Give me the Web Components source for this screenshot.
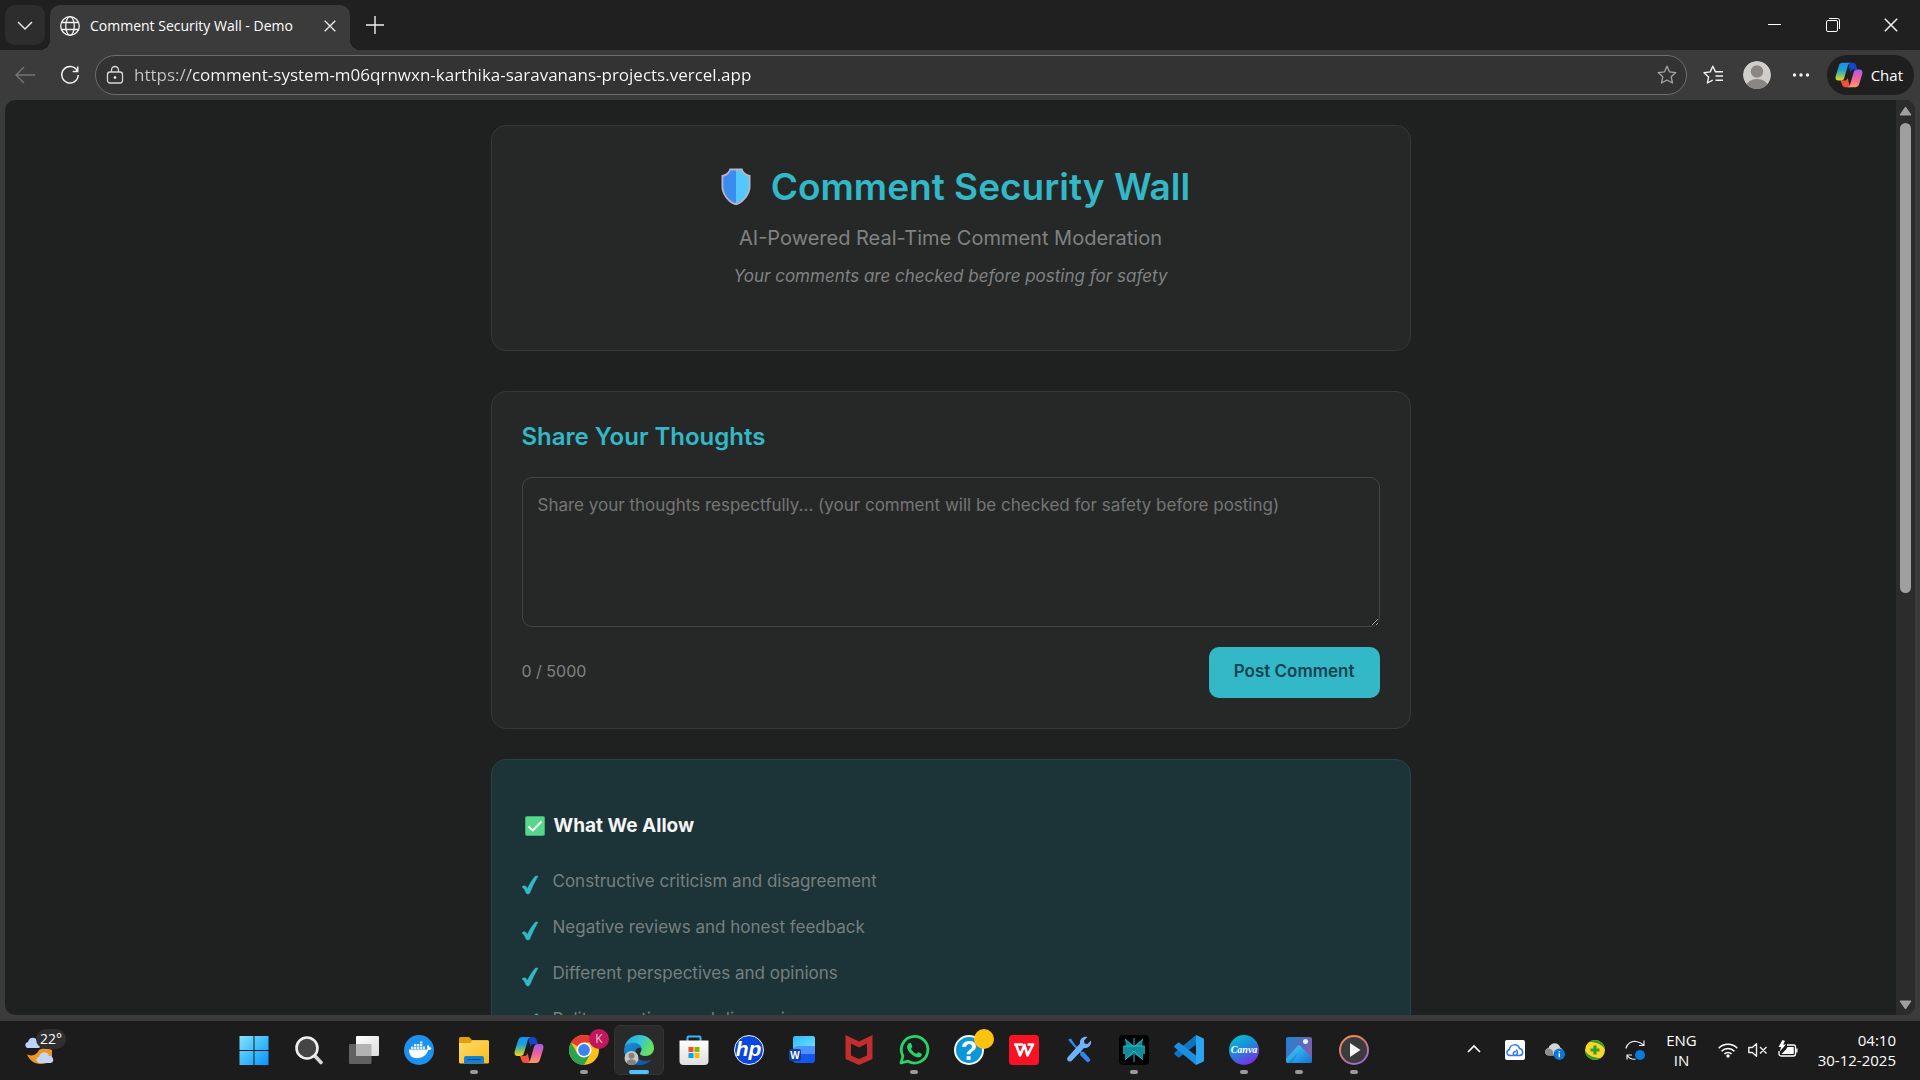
<!DOCTYPE html>
<html lang="en">
<head>
<meta charset="utf-8">
<meta name="viewport" content="width=device-width, initial-scale=1">
<title>Comment Security Wall - Demo</title>
<style>
  :root {
    --ui-font: "Open Sans", "Noto Sans", sans-serif;
    --page-font: Inter, "Liberation Sans", sans-serif;
    --chrome: #3b3b3b;
    --page: #1f2121;
    --surface: #262828;
    --line: #373939;
    --teal: #32b8c6;
    --muted: #808282;
  }
  html, body { height: 100%; }
  body { margin: 0; background: #1c1c1c; font-family: var(--ui-font); color: #fff; overflow: hidden; }
</style>
</head>
<body>
<desktop-shell>
  <browser-tabs slot="window" label="Comment Security Wall - Demo"></browser-tabs>
  <browser-toolbar slot="window" url="https://comment-system-m06qrnwxn-karthika-saravanans-projects.vercel.app"></browser-toolbar>
  <page-viewport slot="window">
    <wall-header>
      Comment Security Wall
      <span slot="subtitle">AI-Powered Real-Time Comment Moderation</span>
      <span slot="note">Your comments are checked before posting for safety</span>
    </wall-header>
    <comment-form max="5000"></comment-form>
    <allow-list heading="What We Allow">
      <allow-item>Constructive criticism and disagreement</allow-item>
      <allow-item>Negative reviews and honest feedback</allow-item>
      <allow-item>Different perspectives and opinions</allow-item>
      <allow-item>Polite questions and discussions</allow-item>
    </allow-list>
  </page-viewport>
  <task-bar slot="taskbar"></task-bar>
</desktop-shell>

<script>
const COPILOT = `
  <defs>
    <linearGradient id="ca" x1="0" y1="0" x2="0" y2="1"><stop offset="0" stop-color="#1b8fe8"/><stop offset=".4" stop-color="#1aa3dc"/><stop offset=".7" stop-color="#7cc06a"/><stop offset="1" stop-color="#f6d51f"/></linearGradient>
    <linearGradient id="cb" x1="0" y1="0" x2="0" y2="1"><stop offset="0" stop-color="#a45cf0"/><stop offset=".5" stop-color="#ee5fa0"/><stop offset="1" stop-color="#ff9a5a"/></linearGradient>
  </defs>
  <path d="M14 2h5c2 0 3 1 3.600 3l1.400 4h-4c-2 0-3 1-3.600 3z" fill="#1446c8"/>
  <path d="M16 28h-5c-2 0-3-1-3.600-3L6 21h4c2 0 3-1 3.600-3z" fill="#f0503c"/>
  <path d="M8 2h9c-2 0-3 2-3.500 4l-3.500 12c-.6 2-1.500 3-4 3H4c-3 0-4-2-3.200-5L4 5.500C4.700 3 6 2 8 2z" fill="url(#ca)"/>
  <path d="M22 28h-9c2 0 3-2 3.500-4L20 12c.6-2 1.500-3 4-3h2c3 0 4 2 3.200 5L26 24.500c-.7 2.500-2 3.500-4 3.500z" fill="url(#cb)"/>`;

// name: [viewBox, markup]
const ICONS = {
  chevron: ['0 0 16 16', '<path d="M1 5l7 7 7-7" fill="none" stroke="#e6e6e6" stroke-width="1.500"/>'],
  globe: ['0 0 20 20', '<g fill="none" stroke="#f2f2f2" stroke-width="1.300"><circle cx="10" cy="10" r="9.300"/><ellipse cx="10" cy="10" rx="4.300" ry="9.300"/><path d="M1.500 6.500h17M1.500 13.500h17"/></g>'],
  close: ['0 0 12 12', '<path d="M.7.7l10.600 10.600M11.300.7L.7 11.300" stroke="#f0f0f0" stroke-width="1.300"/>'],
  plus: ['0 0 20 20', '<path d="M10 1v18M1 10h18" stroke="#f0f0f0" stroke-width="1.400"/>'],
  minimize: ['0 0 14 14', '<path d="M0 6.500h13" stroke="#fff"/>'],
  restore: ['0 0 14 14', '<g fill="none" stroke="#fff"><rect x=".5" y="2.500" width="11" height="11" rx="1.500"/><path d="M3 .5h8.500a2 2 0 0 1 2 2V11"/></g>'],
  back: ['0 0 20 20', '<path d="M9 2L1 10l8 8M1 10h19" fill="none" stroke="#747474" stroke-width="1.400"/>'],
  reload: ['0 0 20 20', '<path d="M17 5.500A8.200 8.200 0 1 0 18.200 10M17.700 1.500v5h-5" fill="none" stroke="#f2f2f2" stroke-width="1.500"/>'],
  lock: ['0 0 18 18', '<g fill="none" stroke="#d8d8d8" stroke-width="1.300"><rect x="1.500" y="6" width="15" height="11" rx="2.500"/><path d="M5.500 6V4a3.500 3.500 0 0 1 7 0v2"/></g><circle cx="9" cy="11.500" r="1.300" fill="#fff"/>'],
  star: ['0 0 20 20', '<path d="M10 1.200l2.600 5.700 6.200.700-4.600 4.200 1.300 6.200L10 15l-5.500 3 1.300-6.200L1.200 7.600l6.200-.7z" fill="none" stroke="#a5a5a5" stroke-width="1.300" stroke-linejoin="round"/>'],
  favorites: ['0 0 20 20', '<path d="M13.500 6.800l-1.100-.2L9.800 1.200 7.200 6.900 1 7.700l4.600 4.200L4.400 18l5.300-2.800" fill="none" stroke="#f2f2f2" stroke-width="1.400" stroke-linejoin="round"/><path d="M12.500 6.800H20M12.500 11H20M12.500 15.200H20" stroke="#f2f2f2" stroke-width="1.400"/>'],
  avatar: ['0 0 28 28', '<defs><clipPath id="av"><circle cx="14" cy="14" r="14"/></clipPath></defs><g clip-path="url(#av)"><circle cx="14" cy="14" r="14" fill="#d0cecb"/><circle cx="14" cy="10.500" r="6.200" fill="#8a8683"/><ellipse cx="14" cy="26" rx="11" ry="8" fill="#8a8683"/></g>'],
  dots: ['0 0 18 18', '<g fill="#f2f2f2"><circle cx="2.500" cy="9" r="1.700"/><circle cx="9" cy="9" r="1.700"/><circle cx="15.500" cy="9" r="1.700"/></g>'],
  copilot: ['0 0 30 30', COPILOT],
  shield: ['0 0 32 38', '<path d="M9.500.500h13c.5 3 3.500 6 8 6.500v12c0 8-9 18-14.500 18S1.500 27 1.500 19V7c4.500-.5 7.500-3.500 8-6.500z" fill="#b9b4c6"/><path d="M16 2.500h-5.500c-1 3-3.500 5.500-7.200 6.200V19C3.300 26 11 35 16 35z" fill="#3a8cf0"/><path d="M16 2.500h5.500c1 3 3.500 5.500 7.200 6.200V19C28.700 26 21 35 16 35z" fill="#55c7ff"/>'],
  allowed: ['0 0 20 20', '<rect width="20" height="20" rx="2" fill="#3fae72"/><rect x="1" y="1" width="18" height="18" rx="1" fill="#58d68d"/><path d="M3.500 10.500l4.300 4L16.500 5.500" fill="none" stroke="#fff" stroke-width="1.800"/>'],
  tick: ['0 0 16 18', '<path d="M0 11c1.500-1.800 3.500-1.800 4.500.2l.8 1.600C7.500 8 10 4 13.500 0H16C13 5.500 10 11 8 16.500 7 18.500 4.800 18.500 3.800 16.500 2.800 14 2 12 0 11z" fill="#32b8c6" stroke="#32b8c6" stroke-width=".5"/>'],

  windows: ['0 0 30 30', '<defs><linearGradient id="w" x1="0" y1="0" x2="1" y2="1"><stop offset="0" stop-color="#86e2ff"/><stop offset=".5" stop-color="#3fbdfb"/><stop offset="1" stop-color="#0a93fb"/></linearGradient></defs><path d="M.5 1H14.500V15H.5zM15.500 1H29.500V15H15.500zM.5 16H14.500V30H.5zM15.500 16H29.500V30H15.500z" fill="url(#w)"/>'],
  search: ['0 0 30 30', '<path d="M20.500 20.500l6.500 7" stroke="#d5d9de" stroke-width="3.600" stroke-linecap="round"/><circle cx="13" cy="13" r="10.500" fill="#454545" stroke="#f0f0f0" stroke-width="2.600"/>'],
  taskview: ['0 0 30 30', '<defs><linearGradient id="tv" x1="0" y1="0" x2="1" y2="1"><stop offset="0" stop-color="#fff"/><stop offset="1" stop-color="#dcdcdc"/></linearGradient></defs><rect x="7" y="1" width="23" height="20" rx="1" fill="url(#tv)"/><path d="M0 10a1 1 0 0 1 1-1h6v12h15.500v7a1 1 0 0 1-1 1H1a1 1 0 0 1-1-1z" fill="#616161"/><rect x="7" y="9" width="15.500" height="12" fill="#b3b3b3"/>'],
  docker: ['0 0 30 30', '<circle cx="15" cy="15" r="15" fill="#1d91ee"/><path d="M5 14.500h18c.5-1.300.4-2.700 0-3.800l1-.7c1 .6 1.500 1.500 1.700 2.600.7-.1 1.300 0 1.800.3-.5 1.500-1.700 2.200-3.300 2.200C22.500 20.500 18.500 23.200 13 23.200 7.500 23.200 5 20 5 14.500z" fill="#fff"/><path d="M7 11.500h2.400v2.400H7zM10 11.500h2.400v2.400H10zM13 11.500h2.400v2.400H13zM16 11.500h2.400v2.400H16zM10 9h2.400v2H10zM13 9h2.400v2H13zM16 9h2.400v2H16zM16 6.500h2.400v2H16zM19 11.500h2v2.400h-2z" fill="#dff0fd"/>'],
  folder: ['0 0 30 30', '<defs><linearGradient id="fo" x1="0" y1="0" x2="1" y2="1"><stop offset="0" stop-color="#ffdb6b"/><stop offset="1" stop-color="#fbbb1b"/></linearGradient></defs><path d="M0 3.500A1.500 1.500 0 0 1 1.500 2H10l3 3h15.500A1.500 1.500 0 0 1 30 6.500V12H0z" fill="#e39f0b"/><path d="M0 8h11l2.500-2.500H28.500A1.500 1.500 0 0 1 30 7v20a1.500 1.500 0 0 1-1.500 1.500h-27A1.500 1.500 0 0 1 0 27z" fill="url(#fo)"/><path d="M5 28.500V23a2 2 0 0 1 2-2h16a2 2 0 0 1 2 2v5.500z" fill="#1382d4"/><path d="M8.500 24.500h13" stroke="#0b4f94" stroke-width="1.200"/>'],
  chrome: ['0 0 30 30', '<circle cx="15" cy="15" r="15" fill="#fbc116"/><path d="M15 15L2 7.500A15 15 0 0 1 28 7.500H15z" fill="#e33b2e"/><path d="M2 7.500A15 15 0 0 0 15 30l6.500-11.300L15 15 8.500 18.700z" fill="#2ba24c"/><circle cx="15" cy="15" r="7.500" fill="#fff"/><circle cx="15" cy="15" r="5.900" fill="#3b82ee"/>'],
  edge: ['0 0 30 30', '<defs><linearGradient id="e1" x1="0" y1="0" x2="1" y2=".4"><stop offset="0" stop-color="#22a3e8"/><stop offset=".55" stop-color="#35c5d6"/><stop offset="1" stop-color="#67e25a"/></linearGradient><linearGradient id="e2" x1="0" y1="0" x2="1" y2="1"><stop offset="0" stop-color="#1793dd"/><stop offset="1" stop-color="#0c4c9c"/></linearGradient></defs><path d="M.5 12C2 5 8 0 15 0c9 0 15 6 15 13 0 5-4 8-8.500 8-3.500 0-5.500-1.200-5.500-2.500 0-1 1.500-1.500 1.500-4 0-3.500-3-6-7-6C6 8.500 2.500 10 .5 12z" fill="url(#e1)"/><path d="M.2 13C2 9.500 5.500 7.800 9.500 7.800c4.500 0 7.500 2.500 8 5.700-3-2-6 0-6 4 0 5 5 8.500 10 8.500 3 0 5-1 6.500-2.300C25.500 27.700 20.500 30 15 30 6 30-1 22 .2 13z" fill="url(#e2)"/><circle cx="7.500" cy="23" r="7" fill="#c9c7c4"/><circle cx="7.500" cy="20.800" r="3" fill="#85817e"/><path d="M2.500 28c.5-5 9.500-5 10 0a7 7 0 0 1-10 0z" fill="#85817e"/>'],
  store: ['0 0 30 30', '<defs><linearGradient id="st" x1="0" y1="0" x2="0" y2="1"><stop offset="0" stop-color="#fff"/><stop offset="1" stop-color="#dedede"/></linearGradient></defs><path d="M8.500 6V2.500A1 1 0 0 1 9.500 1.500h11a1 1 0 0 1 1 1V6" fill="none" stroke="#35b8f5" stroke-width="2"/><path d="M.5 5.500h29V26a4 4 0 0 1-4 4h-21a4 4 0 0 1-4-4z" fill="url(#st)"/><path d="M9.500 12h5v5h-5z" fill="#f25022"/><path d="M15.500 12h5v5h-5z" fill="#7fba00"/><path d="M9.500 18h5v5h-5z" fill="#00a4ef"/><path d="M15.500 18h5v5h-5z" fill="#ffb900"/>'],
  hp: ['0 0 30 30', '<circle cx="15" cy="15" r="14.500" fill="#0a45de" stroke="#eef3ff"/><text x="14.500" y="21" text-anchor="middle" font-family="Liberation Sans, sans-serif" font-style="italic" font-weight="700" font-size="21" fill="#fff">hp</text>'],
  word: ['0 0 30 30', '<defs><linearGradient id="wd" x1="0" y1="0" x2="1" y2="1"><stop offset="0" stop-color="#2bb9fb"/><stop offset="1" stop-color="#6fe0ff"/></linearGradient></defs><rect x="4" y="1" width="22" height="27" rx="3" fill="#1556ee"/><path d="M4 19V4a3 3 0 0 1 3-3h16a3 3 0 0 1 3 3v15z" fill="#4a93fa"/><path d="M4 13V4a3 3 0 0 1 3-3h16a3 3 0 0 1 3 3v7H8z" fill="url(#wd)"/><rect x="0" y="14" width="12" height="12" rx="2" fill="#103f9c"/><text x="6" y="24" text-anchor="middle" font-family="Liberation Sans, sans-serif" font-weight="700" font-size="10" fill="#fff">W</text>'],
  mcafee: ['0 0 30 30', '<path d="M1.500 0L15 6.500 28.500 0v24L15 30 1.500 24z" fill="#c22d2d"/><path d="M7 8.500l8 4 8-4v12l-8 3.500-8-3.500z" fill="#1c1c1c"/>'],
  whatsapp: ['0 0 30 30', '<path d="M2 28l1.900-7A13.300 13.300 0 1 1 9 26.200z" fill="none" stroke="#25d366" stroke-width="2.800" stroke-linejoin="round"/><path d="M9.500 8.500c1-1 2.300-1 2.800.3l1 2.600c.3.700-1.300 2-1.300 2.400 1.300 2.500 3 4 5.300 5 .6 0 1.500-1.800 2.200-1.600l2.700 1.300c1 .6.600 2-.3 2.900-3 2.600-8-.5-10.300-2.900C9 16 6.500 11.500 9.500 8.500z" fill="#25d366"/>'],
  help: ['0 0 30 30', '<circle cx="15" cy="15" r="14" fill="#0c96d8" stroke="#f4f9fc" stroke-width="2"/><text x="15" y="25" text-anchor="middle" font-family="Liberation Sans, sans-serif" font-weight="700" font-size="27" fill="#fff">?</text>'],
  wps: ['0 0 30 30', '<rect width="30" height="30" rx="3.500" fill="#fb1222"/><path d="M5 9.500h9M7 9.500l4 11 4.500-10.500 3 10.500L24 9.500h-5.500" fill="none" stroke="#fff" stroke-width="2.600" stroke-linejoin="round"/>'],
  tools: ['0 0 30 30', '<path d="M4 4.500l3-1 3.500 5.500L18 17l1.500-.5 6.500 7.500c1 1.500-1.500 4-3 3l-7-7 .5-1.500L8.500 10z" fill="#2f86ef"/><path d="M27 5.500l-3.500 3.500-3-.5-.5-3L23.500 2c-4-1-8 1.500-7.500 6.500L3.500 22.500c-1.500 2 1.500 5.500 4 3.500l12.500-13c4.500.5 8-3 7-7.500z" fill="#6fb0ff"/>'],
  perplexity: ['0 0 30 30', '<rect width="30" height="30" rx="4" fill="#000"/><path d="M6 4l8.500 7V19L6 25v-6H4v-8h3zM24 4l-8.500 7V19L24 25v-6h2v-8h-3z" fill="#168b98"/><path d="M15 3v24M4.500 11h21M6 4l9 8 9-8M6 25l9-9 9 9" fill="none" stroke="#1fbccb"/>'],
  vscode: ['0 0 30 30', '<path d="M22 0v9.500L5.500 22.300c-.5.400-1 .4-1.500 0L.7 19.500c-.6-.5-.6-1.500 0-2z" fill="#0f74bf"/><path d="M22 30v-9.500L5.500 7.700c-.5-.4-1-.4-1.500 0L.7 10.500c-.6.500-.6 1.500 0 2z" fill="#1a8fdd"/><path d="M22 0l6.700 3c.8.400 1.300 1 1.300 2v20c0 1-.5 1.600-1.300 2L22 30z" fill="#2ba5f3"/>'],
  canva: ['0 0 30 30', '<defs><linearGradient id="cv" x1=".2" y1="0" x2=".7" y2="1"><stop offset="0" stop-color="#03c3cd"/><stop offset=".45" stop-color="#1d8ad8"/><stop offset="1" stop-color="#7d2ae8"/></linearGradient></defs><circle cx="15" cy="15" r="15" fill="url(#cv)"/><text x="15" y="18" text-anchor="middle" font-family="Liberation Serif, serif" font-style="italic" font-weight="700" font-size="10" fill="#fff">Canva</text>'],
  photos: ['0 0 30 30', '<defs><linearGradient id="p1" x1="0" y1="0" x2="1" y2=".4"><stop offset="0" stop-color="#1e83d6"/><stop offset="1" stop-color="#7b5fae"/></linearGradient><linearGradient id="p2" x1="0" y1="0" x2="1" y2="1"><stop offset="0" stop-color="#43d3f8"/><stop offset="1" stop-color="#1673d8"/></linearGradient></defs><rect x="2" y="2" width="26" height="26" rx="2" fill="url(#p1)"/><path d="M2 24l11.500-13c1-1 2-1 3 0L28 23v3a2 2 0 0 1-2 2H4a2 2 0 0 1-2-2z" fill="url(#p2)"/><path d="M4 28l10-10L8 28z" fill="#168bdc"/><circle cx="21.500" cy="6.500" r="2.500" fill="#e9f2fb"/>'],
  media: ['0 0 30 30', '<defs><linearGradient id="md" x1="0" y1="0" x2=".6" y2="1"><stop offset="0" stop-color="#ff9136"/><stop offset="1" stop-color="#a266c9"/></linearGradient></defs><circle cx="15" cy="15" r="14" fill="#3b3b3b" stroke="url(#md)" stroke-width="2"/><path d="M11 8v14l10.500-7z" fill="#f6f6f6"/>'],

  weather: ['0 0 34 30', '<path d="M2 18c4 3 10 1 12-4 3-2 7-2 13 0v8c-1 3-5 6-11 6C9 28 4 24 2 18z" fill="#ee9526"/><path d="M3 12c-3 0-4-5 0-6 1-5 8-6 10 0 4 0 4 6 0 6z" fill="#bcd3fa"/><path d="M15 27c-4 0-5-5-1-6 1-6 9-6 10-1 5-.5 6 7 1 7z" fill="#c3d6f8"/>'],
  caret: ['0 0 14 14', '<path d="M1 10l6-6 6 6" fill="none" stroke="#fff" stroke-width="1.700"/>'],
  cloudsync: ['0 0 20 20', '<rect width="20" height="20" rx="2" fill="#fff"/><path d="M5 15.500c-4-.5-4-5-.5-6C5 3.500 13 3.500 14.500 8.500c4.500 1 4 7 0 7h-4c-3 0-3-4 .500-4M8.500 15.500H5M11 10c2 0 2 5-.5 5.500" fill="none" stroke="#2f7bef" stroke-width="1.500"/>'],
  onedrive: ['0 0 20 20', '<path d="M4 15.500c-5 0-5-6.500-.5-7.500C6 1.500 14 2 15.500 8c3.500 1 3.500 7.500 0 7.500z" fill="#d5d5d5"/><path d="M4 15.500c-4 0-5-5-1.500-7C7 8 9 12 8 15.500z" fill="#8d8d8d"/><circle cx="14.300" cy="14.300" r="5.700" fill="#0a78d7"/><path d="M14.300 13.200v4M14.300 11v1.200" stroke="#fff" stroke-width="1.400"/>'],
  optimizer: ['0 0 20 20', '<circle cx="10" cy="10" r="10" fill="#f7d72e"/><path d="M4 2A10 10 0 0 1 20 9.500C16 3 9 2 4 2zM16 18A10 10 0 0 1 0 10.500C4 17 11 18 16 18z" fill="#3a9b2d"/><path d="M10 5.500v9M5.500 10h9" stroke="#3a9b2d" stroke-width="3.200"/>'],
  update: ['0 0 20 20', '<path d="M.8 8.500C2 3 7 .8 11.500 1.500 15 2 17.500 4 18.800 5.200M19 .500V5.500H14M2 19.500V15H7M2 15c1.500 2.500 5 4.500 8.500 4.200" fill="none" stroke="#e8e8e8" stroke-width="1.200"/><circle cx="15" cy="15" r="5" fill="#0a7be0"/>'],
  wifi: ['0 0 20 20', '<g fill="none" stroke="#fff" stroke-width="1.500"><path d="M.7 8.200a13 13 0 0 1 18.600 0M3.500 11.200a9 9 0 0 1 13 0M6.400 14a5 5 0 0 1 7.200 0"/></g><circle cx="10" cy="16" r="1.700" fill="#fff"/>'],
  muted: ['0 0 20 20', '<path d="M.8 7.500v5h3.500l4.200 3.800V3.700L4.300 7.500zM12 7l6.500 6.500M18.500 7L12 13.500" fill="none" stroke="#f0f0f0" stroke-width="1.400" stroke-linejoin="round"/>'],
  battery: ['0 0 20 20', '<path d="M9 5h6.500a2 2 0 0 1 2 2v7a2 2 0 0 1-2 2H3a2 2 0 0 1-2-2v-3" fill="none" stroke="#fff" stroke-width="1.300"/><path d="M9.500 7H15a.8.8 0 0 1 .8.800v5.400a.8.8 0 0 1-.8.800H3.500L8 9.500z" fill="#fff"/><path d="M18.200 8.500h1.300v4h-1.300z" fill="#fff"/><path d="M4.500 0L.5 7H3L1.800 11.500 8 4.500H5.200L7 1z" fill="#fff"/>'],
};

class BaseElement extends HTMLElement {
  constructor() {
    super();
    this.attachShadow({ mode: 'open' });
  }
  connectedCallback() {
    this.shadowRoot.innerHTML = this.render();
  }
}

class UiIcon extends BaseElement {
  render() {
    const [box, body] = ICONS[this.getAttribute('name')];
    const [, , w, h] = box.split(' ');
    const width = this.getAttribute('width') || w;
    return `
      <style>:host { display: inline-flex; flex: none; } svg { display: block; overflow: visible; }</style>
      <svg viewBox="${box}" width="${width}" height="${width * h / w}" aria-hidden="true">${body}</svg>`;
  }
}

class DesktopShell extends BaseElement {
  render() {
    return `
      <style>
        :host { display: flex; flex-direction: column; height: 100vh; }
        .window { flex: 1; min-height: 0; display: flex; flex-direction: column; background: var(--chrome); }
      </style>
      <div class="window"><slot name="window"></slot></div>
      <slot name="taskbar"></slot>`;
  }
}

class BrowserTabs extends BaseElement {
  render() {
    return `
      <style>
        :host { display: flex; align-items: flex-start; height: 50px; background: #202020; }
        button { border: 0; padding: 0; margin: 0; background: none; display: flex; align-items: center; justify-content: center; }
        .list { width: 40px; height: 40px; margin: 5px 5px 0; border-radius: 10px; background: #2d2d2d; }
        .tab { position: relative; display: flex; align-items: center; gap: 10px; box-sizing: border-box; width: 300px; height: 45px;
          margin-top: 5px; padding: 0 10px 4px; border-radius: 10px 10px 0 0; background: var(--chrome); }
        /* curved feet where the tab meets the toolbar */
        .tab::before, .tab::after { content: ""; position: absolute; bottom: 0; width: 10px; height: 10px; }
        .tab::before { right: 100%; background: radial-gradient(circle at 0 0, transparent 10px, var(--chrome) 10px); }
        .tab::after { left: 100%; background: radial-gradient(circle at 100% 0, transparent 10px, var(--chrome) 10px); }
        .tab span { flex: 1; font-size: 14px; line-height: 20px; white-space: nowrap; }
        .tab button { width: 20px; height: 20px; }
        .new { width: 32px; height: 40px; margin: 5px 0 0 9px; }
        .controls { display: flex; margin-left: auto; }
        .controls button { width: 58px; height: 49px; }
      </style>
      <button class="list" aria-label="Search tabs"><ui-icon name="chevron"></ui-icon></button>
      <div class="tab">
        <ui-icon name="globe"></ui-icon>
        <span>${this.getAttribute('label')}</span>
        <button aria-label="Close tab"><ui-icon name="close"></ui-icon></button>
      </div>
      <button class="new" aria-label="New tab"><ui-icon name="plus"></ui-icon></button>
      <div class="controls">
        <button aria-label="Minimize"><ui-icon name="minimize"></ui-icon></button>
        <button aria-label="Restore"><ui-icon name="restore"></ui-icon></button>
        <button aria-label="Close"><ui-icon name="close" width="14"></ui-icon></button>
      </div>`;
  }
}

class BrowserToolbar extends BaseElement {
  render() {
    return `
      <style>
        :host { display: flex; align-items: center; height: 50px; padding: 0 6px 0 5px; }
        button { border: 0; padding: 0; background: none; color: inherit; font: inherit; display: flex; align-items: center; justify-content: center; }
        .nav { width: 40px; height: 40px; margin-right: 5px; }
        .address { flex: 1; display: flex; align-items: center; gap: 10px; height: 38px; margin-right: 4px; padding: 0 9px 0 10px; border: 1px solid #6e6e6e;
          border-radius: 20px; background: #333; }
        input { flex: 1; min-width: 0; border: 0; padding: 0; outline: 0; font: 17px/24px var(--ui-font); color: #fff;
          background: linear-gradient(90deg, #c8c8c8 56px, #fff 56px); -webkit-background-clip: text; background-clip: text; -webkit-text-fill-color: transparent; }
        .tool { width: 44px; height: 40px; }
        .chat { gap: 8px; height: 40px; margin-left: 4px; padding: 0 11px 0 8px; border-radius: 20px; background: #1f1f1f; font-size: 15px; line-height: 20px; }
      </style>
      <button class="nav" aria-label="Back"><ui-icon name="back"></ui-icon></button>
      <button class="nav" aria-label="Reload"><ui-icon name="reload"></ui-icon></button>
      <div class="address">
        <ui-icon name="lock"></ui-icon>
        <input type="text" aria-label="Address" spellcheck="false" value="${this.getAttribute('url')}">
        <button aria-label="Add to favorites"><ui-icon name="star"></ui-icon></button>
      </div>
      <button class="tool" aria-label="Favorites"><ui-icon name="favorites"></ui-icon></button>
      <button class="tool" aria-label="Profile"><ui-icon name="avatar"></ui-icon></button>
      <button class="tool" aria-label="Settings"><ui-icon name="dots"></ui-icon></button>
      <button class="chat"><ui-icon name="copilot" width="28"></ui-icon>Chat</button>`;
  }
}

class PageViewport extends BaseElement {
  render() {
    return `
      <style>
        :host { flex: 1; min-height: 0; display: flex; margin: 0 5px 6px; border-radius: 10px; overflow: hidden; background: var(--page); font-family: var(--page-font); }
        .scroll { flex: 1; overflow: hidden; }
        .container { max-width: 920px; margin: 0 auto; padding: 25px 20px; }
        .bar { width: 19px; display: flex; flex-direction: column; align-items: center; gap: 7px; box-sizing: border-box; padding: 6px 0 5px; background: #2c2c2c; }
        .track { flex: 1; }
        .thumb { width: 11px; height: 54%; border-radius: 6px; background: #9f9f9f; }
        svg { display: block; }
      </style>
      <div class="scroll"><main class="container"><slot></slot></main></div>
      <div class="bar" aria-hidden="true">
        <svg width="13" height="10" viewBox="0 0 13 10"><path d="M6.500 1L12 9H1z" fill="#9f9f9f" stroke="#9f9f9f" stroke-linejoin="round"/></svg>
        <div class="track"><div class="thumb"></div></div>
        <svg width="13" height="10" viewBox="0 0 13 10"><path d="M6.500 9L12 1H1z" fill="#9f9f9f" stroke="#9f9f9f" stroke-linejoin="round"/></svg>
      </div>`;
  }
}

class WallHeader extends BaseElement {
  render() {
    return `
      <style>
        :host { display: block; padding: 36px 30px 61px; border: 1px solid var(--line); border-radius: 15px; background: var(--surface); text-align: center; }
        h1 { display: flex; justify-content: center; gap: 10px; margin: 0 0 11px; font-size: 37px; line-height: 50px; font-weight: 600; color: var(--teal); }
        .badge { width: 50px; display: flex; align-items: center; justify-content: center; }
        p { margin: 0; color: var(--muted); }
        .subtitle { margin-bottom: 10px; font-size: 20px; line-height: 30px; }
        .note { font-size: 17px; line-height: 26px; font-style: italic; }
      </style>
      <h1><span class="badge"><ui-icon name="shield"></ui-icon></span><span><slot></slot></span></h1>
      <p class="subtitle"><slot name="subtitle"></slot></p>
      <p class="note"><slot name="note"></slot></p>`;
  }
}

class CommentForm extends BaseElement {
  connectedCallback() {
    super.connectedCallback();
    const area = this.shadowRoot.querySelector('textarea');
    const count = this.shadowRoot.querySelector('output');
    area.addEventListener('input', () => { count.textContent = `${area.value.length} / ${area.maxLength}`; });
  }
  render() {
    const max = this.getAttribute('max');
    return `
      <style>
        :host { display: block; margin-top: 40px; padding: 30px; border: 1px solid var(--line); border-radius: 15px; background: var(--surface); }
        label { display: block; margin-bottom: 25px; font-size: 24px; line-height: 30px; font-weight: 600; color: var(--teal); }
        form { margin: 0; }
        textarea { display: block; box-sizing: border-box; width: 100%; height: 150px; padding: 14px 15px; border: 1px solid #444646; border-radius: 10px;
          background: transparent; color: #f5f5f5; font: 17px/26px var(--page-font); resize: vertical; outline: 0; }
        textarea::placeholder { color: #757575; }
        .row { display: flex; align-items: center; justify-content: space-between; margin-top: 20px; }
        output { padding-bottom: 4px; font-size: 16px; line-height: 24px; color: var(--muted); }
        button { border: 0; margin: 0; padding: 11px 25px 14px; border-radius: 10px; background: var(--teal); color: #134252;
          font: 600 17px/26px var(--page-font); }
      </style>
      <form>
        <label for="comment">Share Your Thoughts</label>
        <textarea id="comment" maxlength="${max}" placeholder="Share your thoughts respectfully... (your comment will be checked for safety before posting)"></textarea>
        <div class="row">
          <output for="comment">0 / ${max}</output>
          <button type="button">Post Comment</button>
        </div>
      </form>`;
  }
}

class AllowList extends BaseElement {
  render() {
    return `
      <style>
        :host { display: block; margin-top: 30px; padding: 51px 30px 30px; border: 1px solid #2b4145; border-radius: 15px; background: #1c3337; }
        h3 { display: flex; align-items: center; gap: 9px; margin: 0 0 17px; padding-left: 3px; font-size: 19px; line-height: 30px; font-weight: 700; color: #f5f5f5; }
      </style>
      <h3><ui-icon name="allowed"></ui-icon>${this.getAttribute('heading')}</h3>
      <div role="list"><slot></slot></div>`;
  }
}

class AllowItem extends BaseElement {
  connectedCallback() {
    this.setAttribute('role', 'listitem');
    super.connectedCallback();
  }
  render() {
    return `
      <style>
        :host { display: flex; align-items: flex-start; gap: 15px; padding: 10px 0; font-size: 17px; line-height: 26px; color: #76807f; }
        ui-icon { padding-top: 8px; }
      </style>
      <ui-icon name="tick"></ui-icon><span><slot></slot></span>`;
  }
}

const APPS = [
  ['windows', 'Start'], ['search', 'Search'], ['taskview', 'Task view'], ['docker', 'Docker Desktop'],
  ['folder', 'File Explorer', 'open'], ['copilot', 'Copilot'], ['chrome', 'Google Chrome', 'open', 'k'],
  ['edge', 'Microsoft Edge', 'active'], ['store', 'Microsoft Store'], ['hp', 'HP Smart'], ['word', 'Word'],
  ['mcafee', 'McAfee'], ['whatsapp', 'WhatsApp', 'open'], ['help', 'HP Support', '', 'dot'], ['wps', 'WPS Office'],
  ['tools', 'Tools'], ['perplexity', 'Perplexity', 'open'], ['vscode', 'Visual Studio Code'], ['canva', 'Canva', 'open'],
  ['photos', 'Photos', 'open'], ['media', 'Media Player', 'open'],
];

class TaskApp extends BaseElement {
  render() {
    const badge = this.getAttribute('badge');
    const mark = badge === 'k' ? '<b class="badge k">K</b>' : badge === 'dot' ? '<b class="badge"></b>' : '';
    return `
      <style>
        :host { display: block; }
        button { position: relative; width: 50px; height: 50px; border: 1px solid transparent; border-radius: 6px; padding: 0; background: none;
          display: flex; align-items: center; justify-content: center; }
        :host([state=active]) button { background: #2a2a2a; border-color: #343434; }
        :host([state]) button::after { content: ""; position: absolute; bottom: 0; width: 8px; height: 4px; border-radius: 2px; background: #9a9a9a; }
        :host([state=active]) button::after { width: 20px; background: #4cc2ff; }
        .badge { position: absolute; top: 3px; right: -1px; width: 20px; height: 20px; border-radius: 50%; background: #ffc20e; }
        .k { background: #c2185b; color: #f3c0d6; font: 12px/20px var(--ui-font); text-align: center; }
      </style>
      <button aria-label="${this.getAttribute('label')}"><ui-icon name="${this.getAttribute('icon')}" width="30"></ui-icon>${mark}</button>`;
  }
}

class TaskBar extends BaseElement {
  render() {
    const apps = APPS.map(([icon, label, state, badge]) =>
      `<task-app icon="${icon}" label="${label}"${state ? ` state="${state}"` : ''}${badge ? ` badge="${badge}"` : ''}></task-app>`).join('');
    const tray = ['cloudsync', 'onedrive', 'optimizer', 'update'].map((name) => `<ui-icon name="${name}"></ui-icon>`).join('');
    return `
      <style>
        :host { display: flex; align-items: center; box-sizing: border-box; height: 59px; padding: 0 24px 2px 0; background: #1c1c1c; font-size: 15px; line-height: 20px; }
        button { border: 0; padding: 0; background: none; color: inherit; font: inherit; }
        .side { flex: 0 0 203px; padding-left: 25px; display: flex; }
        .weather { position: relative; display: flex; padding-top: 2px; }
        .weather span { position: absolute; left: 11px; top: -5px; padding: 0 4px; border-radius: 10px; background: #2f2f2f; font-size: 14px; line-height: 20px; }
        nav { display: flex; gap: 5px; padding-left: 1px; }
        .tray { display: flex; align-items: center; gap: 20px; margin-left: auto; }
        .more { margin-right: 4px; }
        .quick { display: flex; gap: 10px; }
        .lang { text-align: center; padding: 0 1px; }
        .clock { text-align: right; }
      </style>
      <div class="side"><button class="weather" aria-label="Weather"><ui-icon name="weather"></ui-icon><span>22°</span></button></div>
      <nav aria-label="Taskbar">${apps}</nav>
      <div class="tray">
        <button class="more" aria-label="Show hidden icons"><ui-icon name="caret"></ui-icon></button>
        ${tray}
        <button class="lang">ENG<br>IN</button>
        <button class="quick" aria-label="Network, volume, battery"><ui-icon name="wifi"></ui-icon><ui-icon name="muted"></ui-icon><ui-icon name="battery"></ui-icon></button>
        <button class="clock">04:10<br>30-12-2025</button>
      </div>`;
  }
}

customElements.define('ui-icon', UiIcon);
customElements.define('desktop-shell', DesktopShell);
customElements.define('browser-tabs', BrowserTabs);
customElements.define('browser-toolbar', BrowserToolbar);
customElements.define('page-viewport', PageViewport);
customElements.define('wall-header', WallHeader);
customElements.define('comment-form', CommentForm);
customElements.define('allow-list', AllowList);
customElements.define('allow-item', AllowItem);
customElements.define('task-app', TaskApp);
customElements.define('task-bar', TaskBar);
</script>
</body>
</html>
